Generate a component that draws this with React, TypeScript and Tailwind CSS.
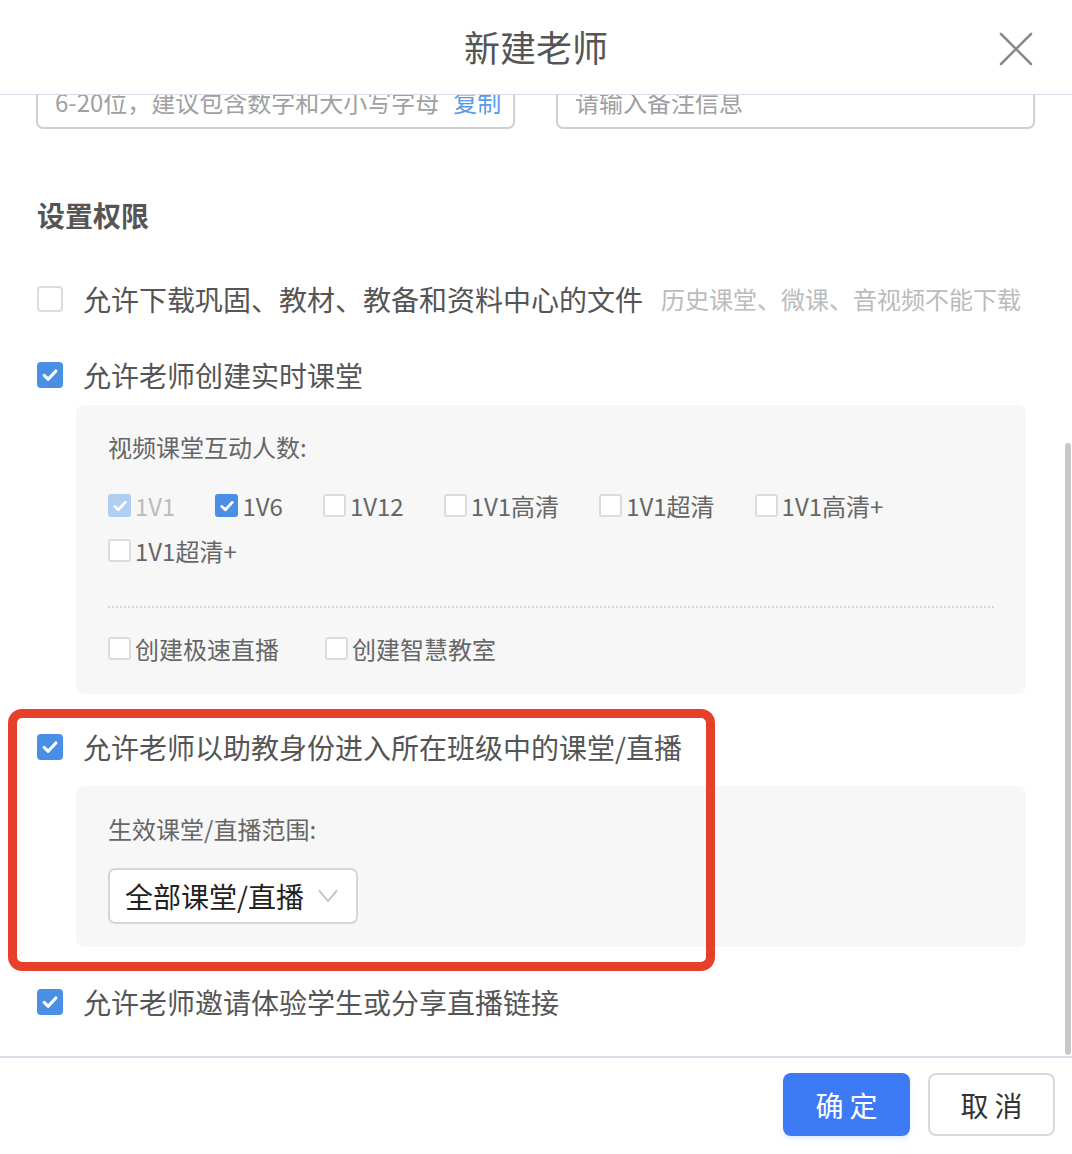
import React from "react";

const F = { fontFamily: '"Noto Sans CJK SC", "Noto Sans", sans-serif' };

function Check({ checked, disabled, small }: { checked?: boolean; disabled?: boolean; small?: boolean }) {
  const size = small ? "w-[23px] h-[23px] rounded-[3px]" : "w-[26px] h-[26px] rounded-[4px]";
  let color = "bg-white border-2 border-[#dcdcdc]";
  if (checked && disabled) color = "bg-[#b0cdf2]";
  else if (checked) color = "bg-[#4a8fe6]";
  return (
    <span className={`${size} ${color} shrink-0 flex items-center justify-center`}>
      {checked && (
        <svg width={small ? 16 : 18} height={small ? 16 : 18} viewBox="0 0 16 16" fill="none">
          <path d="M2.8 8.4 L6.4 11.8 L13.2 4.4" stroke="white" strokeWidth="2.8" strokeLinecap="round" strokeLinejoin="round" />
        </svg>
      )}
    </span>
  );
}

function Opt({ label, checked, disabled, mr = "mr-[40px]" }: { label: string; checked?: boolean; disabled?: boolean; mr?: string }) {
  return (
    <div className={`flex items-center h-[45px] ${mr}`}>
      <Check small checked={checked} disabled={disabled} />
      <span className={`ml-[4px] text-[24px] leading-[34px] ${disabled ? "text-[#bbbbbb]" : "text-[#666666]"}`}>{label}</span>
    </div>
  );
}

function Row({ checked, label, hint }: { checked?: boolean; label: string; hint?: string }) {
  return (
    <div className="flex items-center h-[40px]">
      <Check checked={checked} />
      <span className="ml-[20px] text-[28px] leading-[40px] text-[#555555]">{label}</span>
      {hint && <span className="ml-[18px] text-[24px] leading-[40px] text-[#bbbbbb]">{hint}</span>}
    </div>
  );
}

export default function App() {
  return (
    <div className="w-[1072px] h-[1154px] bg-white flex flex-col overflow-hidden" style={F}>
      {/* header */}
      <div className="relative h-[95px] shrink-0 border-b border-[#d9dce6] flex items-center justify-center bg-white z-10">
        <span className="text-[36px] leading-[48px] text-[#555555] -mt-[3px]">新建老师</span>
        <svg className="absolute left-[999px] top-[32px]" width="34" height="34" viewBox="0 0 34 34" fill="none">
          <path d="M2 2 L32 32 M32 2 L2 32" stroke="#8a8a8a" strokeWidth="2.6" strokeLinecap="round" />
        </svg>
      </div>

      {/* scroll area */}
      <div className="relative flex-1 overflow-hidden">
        <div className="relative pt-px -mt-px">
          <div className="grid grid-cols-2 gap-[41px] pl-[36px] pr-[37px] -mt-[21px]">
            <div className="h-[55px] border-2 border-[#d0d0d0] rounded-[7px] flex items-center px-[17px]">
              <span className="text-[24px] text-[#a0a0a0] whitespace-nowrap">6-20位，建议包含数字和大小写字母</span>
              <span className="ml-[14px] text-[24px] text-[#5a9be8] whitespace-nowrap">复制</span>
            </div>
            <div className="h-[55px] border-2 border-[#d0d0d0] rounded-[7px] flex items-center px-[17px]">
              <span className="text-[24px] text-[#a0a0a0]">请输入备注信息</span>
            </div>
          </div>

          <div className="pl-[37px] pr-[46px]">
            <div className="mt-[66px] h-[40px] flex items-center text-[28px] font-bold text-[#555555]">设置权限</div>

            <div className="mt-[44px]">
              <Row label="允许下载巩固、教材、教备和资料中心的文件" hint="历史课堂、微课、音视频不能下载" />
            </div>
            <div className="mt-[36px]">
              <Row checked label="允许老师创建实时课堂" />
            </div>

            <div className="mt-[10px] ml-[39px] w-[950px] bg-[#f7f7f7] rounded-[8px] pt-[24px] pb-[23px] px-[32px]">
              <div className="text-[24px] leading-[36px] text-[#666666]">视频课堂互动人数:</div>
              <div className="mt-[18px] flex flex-wrap">
                <Opt label="1V1" checked disabled />
                <Opt label="1V6" checked />
                <Opt label="1V12" />
                <Opt label="1V1高清" />
                <Opt label="1V1超清" />
                <Opt label="1V1高清+" />
                <Opt label="1V1超清+" />
              </div>
              <div className="mt-[33px] border-t-2 border-dotted border-[#d6d6d6]" />
              <div className="mt-[18px] flex">
                <Opt label="创建极速直播" mr="mr-[46px]" />
                <Opt label="创建智慧教室" />
              </div>
            </div>

            <div className="mt-[33px]">
              <Row checked label="允许老师以助教身份进入所在班级中的课堂/直播" />
            </div>

            <div className="mt-[19px] ml-[39px] w-[950px] bg-[#f7f7f7] rounded-[8px] pt-[25px] pb-[23px] px-[32px]">
              <div className="text-[24px] leading-[36px] text-[#666666]">生效课堂/直播范围:</div>
              <div className="mt-[21px] w-[250px] h-[56px] bg-white border-2 border-[#d6d6d6] rounded-[7px] flex items-center pl-[15px]">
                <span className="text-[28px] text-[#222222]">全部课堂/直播</span>
                <svg className="ml-[14px]" width="20" height="14" viewBox="0 0 20 14" fill="none">
                  <path d="M1.5 2 L10 12 L18.5 2" stroke="#bdbdbd" strokeWidth="1.8" strokeLinecap="round" strokeLinejoin="round" />
                </svg>
              </div>
            </div>

            <div className="mt-[35px]">
              <Row checked label="允许老师邀请体验学生或分享直播链接" />
            </div>
          </div>
        </div>

        {/* highlight frame */}
        <div className="absolute left-[8px] top-[614px] w-[707px] h-[262px] border-[9px] border-[#e6402b] rounded-[14px] pointer-events-none" />

        {/* scrollbar thumb */}
        <div className="absolute right-[1px] top-[348px] w-[6px] h-[612px] rounded-[3px] bg-[#c8c8c8]" />
      </div>

      {/* footer */}
      <div className="h-[98px] shrink-0 border-t-2 border-[#d9dce6] flex items-center justify-end pr-[17px] gap-[18px] bg-white">
        <button className="w-[127px] h-[63px] rounded-[8px] bg-[#3d7bf6] text-white text-[28px] tracking-[6px] pl-[6px] shadow-[0_3px_4px_rgba(61,123,246,0.15)] -mt-[3px]">确定</button>
        <button className="w-[127px] h-[63px] rounded-[8px] bg-white border-2 border-[#d9d9d9] text-[#333333] text-[28px] tracking-[6px] pl-[6px] -mt-[3px]">取消</button>
      </div>
    </div>
  );
}
